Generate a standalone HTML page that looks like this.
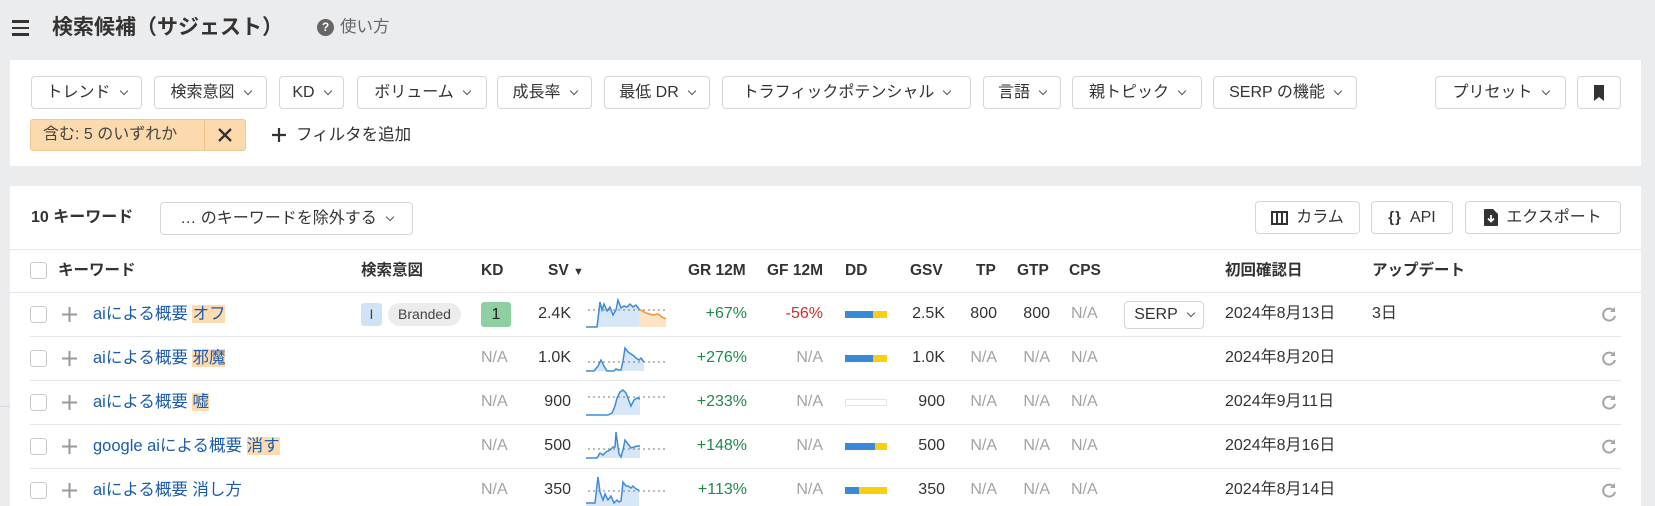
<!DOCTYPE html>
<html><head><meta charset="utf-8"><style>
*{box-sizing:border-box;margin:0;padding:0}
body{width:1655px;height:501px;overflow:hidden;background:#ebecee;font-family:"Liberation Sans","Noto Sans CJK JP",sans-serif;color:#333;font-size:16px;line-height:20px;position:relative}
.a{position:absolute;white-space:nowrap}
.panel{position:absolute;background:#fff;left:10px;width:1631px}
.btn{position:absolute;height:33px;border:1px solid #d3d5d9;border-radius:4px;background:#fff;display:flex;align-items:center;justify-content:center;font-size:16px;color:#333;gap:8px;line-height:20px}
.chev{display:inline-block;width:6px;height:6px;border-right:1.5px solid #555;border-bottom:1.5px solid #555;transform:rotate(45deg);margin-top:-4px;margin-left:2px}
.hd{position:absolute;top:261px;font-weight:bold;font-size:15.5px;color:#333;white-space:nowrap}
.cb{position:absolute;width:17px;height:17px;border:1px solid #c6c8cc;border-radius:3px;background:#fff}
.line{position:absolute;height:1px;background:#e6e7ea}
.num{position:absolute;text-align:right;white-space:nowrap;font-size:16px}
.na{color:#a3a3a3}
.kw{position:absolute;color:#1a5bb0;font-size:16.5px;white-space:nowrap}
.hl{background:#ffdbb0}
.plus{position:absolute;left:62px}
</style></head><body>
<!-- top bar -->
<div class="a" style="left:12px;top:20px;width:17px">
<div style="height:2.5px;background:#333;margin-bottom:4px"></div><div style="height:2.5px;background:#333;margin-bottom:4px"></div><div style="height:2.5px;background:#333"></div></div>
<div class="a" style="left:52px;top:16px;font-size:21px;line-height:24px;font-weight:bold;color:#333">検索候補（サジェスト）</div>
<div class="a" style="left:317px;top:19px;width:17px;height:17px;border-radius:50%;background:#666;color:#fff;font-size:12px;font-weight:bold;text-align:center;line-height:17px">?</div>
<div class="a" style="left:340px;top:17px;font-size:16.5px;color:#666">使い方</div>

<div class="panel" style="top:60px;height:106px"></div>
<div class="btn" style="left:31px;top:76px;width:111px">トレンド<span class="chev"></span></div>
<div class="btn" style="left:154px;top:76px;width:113px">検索意図<span class="chev"></span></div>
<div class="btn" style="left:279px;top:76px;width:65px">KD<span class="chev"></span></div>
<div class="btn" style="left:357px;top:76px;width:130px">ボリューム<span class="chev"></span></div>
<div class="btn" style="left:497px;top:76px;width:95px">成長率<span class="chev"></span></div>
<div class="btn" style="left:604px;top:76px;width:106px">最低 DR<span class="chev"></span></div>
<div class="btn" style="left:722px;top:76px;width:249px">トラフィックポテンシャル<span class="chev"></span></div>
<div class="btn" style="left:983px;top:76px;width:78px">言語<span class="chev"></span></div>
<div class="btn" style="left:1072px;top:76px;width:130px">親トピック<span class="chev"></span></div>
<div class="btn" style="left:1213px;top:76px;width:144px">SERP の機能<span class="chev"></span></div>
<div class="btn" style="left:1435px;top:76px;width:131px">プリセット<span class="chev"></span></div>
<div class="btn" style="left:1577px;top:76px;width:44px"><svg width="12" height="16" viewBox="0 0 12 16"><path d="M1 0h10v16l-5-4-5 4z" fill="#333"/></svg></div>

<div class="a" style="left:30px;top:119px;width:216px;height:32px;background:#fdd9ae;border:1px solid #f3c690;border-radius:3px"></div>
<div class="a" style="left:204px;top:120px;width:1px;height:30px;background:#efbf86"></div>
<div class="a" style="left:43px;top:125px;font-size:16px;color:#444">含む: 5 のいずれか</div>
<svg class="a" style="left:217px;top:127px" width="16" height="16" viewBox="0 0 16 16"><path d="M2 2l12 12M14 2L2 14" stroke="#333" stroke-width="2.3"/></svg>
<svg class="a" style="left:271px;top:127px" width="16" height="16" viewBox="0 0 16 16"><path d="M8 1v14M1 8h14" stroke="#333" stroke-width="2.2"/></svg>
<div class="a" style="left:296px;top:125px;font-size:16.5px;color:#333">フィルタを追加</div>

<div class="a" style="left:0;top:406px;width:10px;height:1px;background:#d8d9dc"></div>

<div class="panel" style="top:186px;height:320px"></div>
<div class="a" style="left:31px;top:208px;font-size:16px;font-weight:bold;color:#333">10 キーワード</div>
<div class="btn" style="left:160px;top:202px;width:253px">… のキーワードを除外する<span class="chev"></span></div>
<div class="btn" style="left:1255px;top:201px;width:105px"><svg width="17" height="14" viewBox="0 0 17 14"><rect x="1" y="1" width="15" height="12" fill="none" stroke="#333" stroke-width="2"/><path d="M6 1v12M11 1v12" stroke="#333" stroke-width="2"/></svg>カラム</div>
<div class="btn" style="left:1371px;top:201px;width:82px"><b style="font-size:15px;letter-spacing:1px">{}</b>API</div>
<div class="btn" style="left:1465px;top:201px;width:156px"><svg width="14" height="17" viewBox="0 0 14 17"><path d="M0 1q0-1 1-1h8l5 5v11q0 1-1 1H1q-1 0-1-1z" fill="#333"/><path d="M7 6v6M4 9.5l3 3 3-3" stroke="#fff" stroke-width="1.8" fill="none"/></svg>エクスポート</div>

<div class="line" style="left:10px;width:1631px;top:249px"></div>
<div class="line" style="left:10px;width:1631px;top:292px"></div>
<div class="cb" style="left:30px;top:262px"></div>
<div class="hd" style="left:58px">キーワード</div>
<div class="hd" style="left:361px">検索意図</div>
<div class="hd" style="left:481px">KD</div>
<div class="hd" style="left:548px">SV <span style="font-size:11px">▼</span></div>
<div class="hd" style="left:688px">GR 12M</div>
<div class="hd" style="left:767px">GF 12M</div>
<div class="hd" style="left:845px">DD</div>
<div class="hd" style="left:910px">GSV</div>
<div class="hd" style="left:976px">TP</div>
<div class="hd" style="left:1017px">GTP</div>
<div class="hd" style="left:1069px">CPS</div>
<div class="hd" style="left:1225px">初回確認日</div>
<div class="hd" style="left:1372px">アップデート</div>

<!-- rows -->
<div class="line" style="left:30px;width:1591px;top:336px"></div>
<div class="line" style="left:30px;width:1591px;top:380px"></div>
<div class="line" style="left:30px;width:1591px;top:424px"></div>
<div class="line" style="left:30px;width:1591px;top:468px"></div>

<!-- row1 y 292-336 -->
<div class="cb" style="left:30px;top:306px"></div><svg class="plus" style="top:307px" width="15" height="15" viewBox="0 0 15 15"><path d="M7.5 0v15M0 7.5h15" stroke="#999" stroke-width="2"/></svg>
<div class="kw" style="left:93px;top:304px">aiによる概要 <span class="hl">オフ</span></div>
<div class="a" style="left:361px;top:303px;width:21px;height:23px;background:#cfe3f7;border-radius:3px;text-align:center;line-height:23px;font-size:14px;color:#444">I</div>
<div class="a" style="left:388px;top:303px;width:73px;height:23px;background:#ececec;border-radius:12px;text-align:center;line-height:23px;font-size:14px;color:#444">Branded</div>
<div class="a" style="left:481px;top:302px;width:30px;height:25px;background:#8fd0a2;border-radius:3px;text-align:center;line-height:25px;font-size:16px;color:#222">1</div>
<div class="num" style="right:1084px;top:304px">2.4K</div>
<svg class="a" style="left:586px;top:298px" width="82" height="32" viewBox="0 0 82 32"><path d="M0 29H11L14 4 16 12 18 6 21 13 24 9 27 17 30 12 32 2 35 10 38 8 41 9 44 6 47 9 50 7 53 11 54 29H0Z" fill="#d7e7f7"/><path d="M0 29H11L14 4 16 12 18 6 21 13 24 9 27 17 30 12 32 2 35 10 38 8 41 9 44 6 47 9 50 7 53 11" fill="none" stroke="#3d8bdb" stroke-width="1.5"/><path d="M53 11 60 15 67 17 72 16 76 19 80 21V29H53Z" fill="#fde3c6"/><path d="M53 11 60 15 67 17 72 16 76 19 80 21" fill="none" stroke="#f0962e" stroke-width="1.5"/><path d="M2 12H80" stroke="#777" stroke-dasharray="2 3"/></svg>
<div class="num" style="right:908px;top:304px;color:#1e8a4a">+67%</div>
<div class="num" style="right:832px;top:304px;color:#d42a2a">-56%</div>
<div class="a" style="left:845px;top:311px;width:28px;height:7px;background:#3a89d8"></div><div class="a" style="left:873px;top:311px;width:14px;height:7px;background:#f9cf10"></div>
<div class="num" style="right:710px;top:304px">2.5K</div>
<div class="num" style="right:658px;top:304px">800</div>
<div class="num" style="right:605px;top:304px">800</div>
<div class="num na" style="left:1071px;top:304px">N/A</div>
<div class="btn" style="left:1124px;top:301px;width:80px;height:28px">SERP<span class="chev"></span></div>
<div class="a" style="left:1225px;top:304px">2024年8月13日</div>
<div class="a" style="left:1372px;top:304px">3日</div>

<!-- row2 336-380 -->
<div class="cb" style="left:30px;top:350px"></div><svg class="plus" style="top:351px" width="15" height="15" viewBox="0 0 15 15"><path d="M7.5 0v15M0 7.5h15" stroke="#999" stroke-width="2"/></svg>
<div class="kw" style="left:93px;top:348px">aiによる概要 <span class="hl">邪魔</span></div>
<div class="num na" style="left:481px;top:348px">N/A</div>
<div class="num" style="right:1084px;top:348px">1.0K</div>
<svg class="a" style="left:586px;top:342px" width="82" height="32" viewBox="0 0 82 32"><path d="M0 29H8L12 24 15 18 18 24 21 29 28 29 30 27 33 28 35 28 37 19 39 6 42 10 45 12 48 14 50 16 53 18 55 16 58 20V29H0Z" fill="#d7e7f7"/><path d="M0 29H8L12 24 15 18 18 24 21 29 28 29 30 27 33 28 35 28 37 19 39 6 42 10 45 12 48 14 50 16 53 18 55 16 58 20" fill="none" stroke="#3d8bdb" stroke-width="1.5"/><path d="M2 20H80" stroke="#777" stroke-dasharray="2 3"/></svg>
<div class="num" style="right:908px;top:348px;color:#1e8a4a">+276%</div>
<div class="num na" style="right:832px;top:348px">N/A</div>
<div class="a" style="left:845px;top:355px;width:28px;height:7px;background:#3a89d8"></div><div class="a" style="left:873px;top:355px;width:14px;height:7px;background:#f9cf10"></div>
<div class="num" style="right:710px;top:348px">1.0K</div>
<div class="num na" style="right:658px;top:348px">N/A</div>
<div class="num na" style="right:605px;top:348px">N/A</div>
<div class="num na" style="left:1071px;top:348px">N/A</div>
<div class="a" style="left:1225px;top:348px">2024年8月20日</div>

<!-- row3 380-424 -->
<div class="cb" style="left:30px;top:394px"></div><svg class="plus" style="top:395px" width="15" height="15" viewBox="0 0 15 15"><path d="M7.5 0v15M0 7.5h15" stroke="#999" stroke-width="2"/></svg>
<div class="kw" style="left:93px;top:392px">aiによる概要 <span class="hl">嘘</span></div>
<div class="num na" style="left:481px;top:392px">N/A</div>
<div class="num" style="right:1084px;top:392px">900</div>
<svg class="a" style="left:586px;top:386px" width="82" height="32" viewBox="0 0 82 32"><path d="M0 29H22L26 27 29 20 31 12 34 6 37 4 40 7 43 15 45 20 48 14 51 12 54 13V29H0Z" fill="#d7e7f7"/><path d="M0 29H22L26 27 29 20 31 12 34 6 37 4 40 7 43 15 45 20 48 14 51 12 54 13" fill="none" stroke="#3d8bdb" stroke-width="1.5"/><path d="M2 11H80" stroke="#777" stroke-dasharray="2 3"/></svg>
<div class="num" style="right:908px;top:392px;color:#1e8a4a">+233%</div>
<div class="num na" style="right:832px;top:392px">N/A</div>
<div class="a" style="left:845px;top:399px;width:42px;height:7px;border:1px solid #e4e4e4"></div>
<div class="num" style="right:710px;top:392px">900</div>
<div class="num na" style="right:658px;top:392px">N/A</div>
<div class="num na" style="right:605px;top:392px">N/A</div>
<div class="num na" style="left:1071px;top:392px">N/A</div>
<div class="a" style="left:1225px;top:392px">2024年9月11日</div>

<!-- row4 424-468 -->
<div class="cb" style="left:30px;top:438px"></div><svg class="plus" style="top:439px" width="15" height="15" viewBox="0 0 15 15"><path d="M7.5 0v15M0 7.5h15" stroke="#999" stroke-width="2"/></svg>
<div class="kw" style="left:93px;top:436px">google aiによる概要 <span class="hl">消す</span></div>
<div class="num na" style="left:481px;top:436px">N/A</div>
<div class="num" style="right:1084px;top:436px">500</div>
<svg class="a" style="left:586px;top:430px" width="82" height="32" viewBox="0 0 82 32"><path d="M0 28H11L14 23 17 25 20 22 24 20 27 17 29 17 30 2 33 24 35 27 37 20 39 10 42 14 45 18 48 17 51 16 54 16V28H0Z" fill="#d7e7f7"/><path d="M0 28H11L14 23 17 25 20 22 24 20 27 17 29 17 30 2 33 24 35 27 37 20 39 10 42 14 45 18 48 17 51 16 54 16" fill="none" stroke="#3d8bdb" stroke-width="1.5"/><path d="M2 19H80" stroke="#777" stroke-dasharray="2 3"/></svg>
<div class="num" style="right:908px;top:436px;color:#1e8a4a">+148%</div>
<div class="num na" style="right:832px;top:436px">N/A</div>
<div class="a" style="left:845px;top:443px;width:30px;height:7px;background:#3a89d8"></div><div class="a" style="left:875px;top:443px;width:12px;height:7px;background:#f9cf10"></div>
<div class="num" style="right:710px;top:436px">500</div>
<div class="num na" style="right:658px;top:436px">N/A</div>
<div class="num na" style="right:605px;top:436px">N/A</div>
<div class="num na" style="left:1071px;top:436px">N/A</div>
<div class="a" style="left:1225px;top:436px">2024年8月16日</div>

<!-- row5 468- -->
<div class="cb" style="left:30px;top:482px"></div><svg class="plus" style="top:483px" width="15" height="15" viewBox="0 0 15 15"><path d="M7.5 0v15M0 7.5h15" stroke="#999" stroke-width="2"/></svg>
<div class="kw" style="left:93px;top:480px">aiによる概要 消し方</div>
<div class="num na" style="left:481px;top:480px">N/A</div>
<div class="num" style="right:1084px;top:480px">350</div>
<svg class="a" style="left:586px;top:474px" width="82" height="32" viewBox="0 0 82 32"><path d="M0 29H9L12 3 14 18 17 26 19 20 22 26 25 22 28 29 31 26 33 28 35 27 37 8 40 12 42 12 45 14 47 12 50 15 53 16V32H0Z" fill="#d7e7f7"/><path d="M0 29H9L12 3 14 18 17 26 19 20 22 26 25 22 28 29 31 26 33 28 35 27 37 8 40 12 42 12 45 14 47 12 50 15 53 16" fill="none" stroke="#3d8bdb" stroke-width="1.5"/><path d="M2 17H80" stroke="#777" stroke-dasharray="2 3"/></svg>
<div class="num" style="right:908px;top:480px;color:#1e8a4a">+113%</div>
<div class="num na" style="right:832px;top:480px">N/A</div>
<div class="a" style="left:845px;top:487px;width:14px;height:7px;background:#3a89d8"></div><div class="a" style="left:859px;top:487px;width:28px;height:7px;background:#f9cf10"></div>
<div class="num" style="right:710px;top:480px">350</div>
<div class="num na" style="right:658px;top:480px">N/A</div>
<div class="num na" style="right:605px;top:480px">N/A</div>
<div class="num na" style="left:1071px;top:480px">N/A</div>
<div class="a" style="left:1225px;top:480px">2024年8月14日</div>

<!-- refresh icons -->
<svg class="a" style="left:1601px;top:306px" width="16" height="16" viewBox="0 0 16 16"><path d="M13 5A6 6 0 1 0 14 10" fill="none" stroke="#a5a5a5" stroke-width="2"/><path d="M14 1v5h-5z" fill="#a5a5a5"/></svg>
<svg class="a" style="left:1601px;top:350px" width="16" height="16" viewBox="0 0 16 16"><path d="M13 5A6 6 0 1 0 14 10" fill="none" stroke="#a5a5a5" stroke-width="2"/><path d="M14 1v5h-5z" fill="#a5a5a5"/></svg>
<svg class="a" style="left:1601px;top:394px" width="16" height="16" viewBox="0 0 16 16"><path d="M13 5A6 6 0 1 0 14 10" fill="none" stroke="#a5a5a5" stroke-width="2"/><path d="M14 1v5h-5z" fill="#a5a5a5"/></svg>
<svg class="a" style="left:1601px;top:438px" width="16" height="16" viewBox="0 0 16 16"><path d="M13 5A6 6 0 1 0 14 10" fill="none" stroke="#a5a5a5" stroke-width="2"/><path d="M14 1v5h-5z" fill="#a5a5a5"/></svg>
<svg class="a" style="left:1601px;top:482px" width="16" height="16" viewBox="0 0 16 16"><path d="M13 5A6 6 0 1 0 14 10" fill="none" stroke="#a5a5a5" stroke-width="2"/><path d="M14 1v5h-5z" fill="#a5a5a5"/></svg>
</body></html>
